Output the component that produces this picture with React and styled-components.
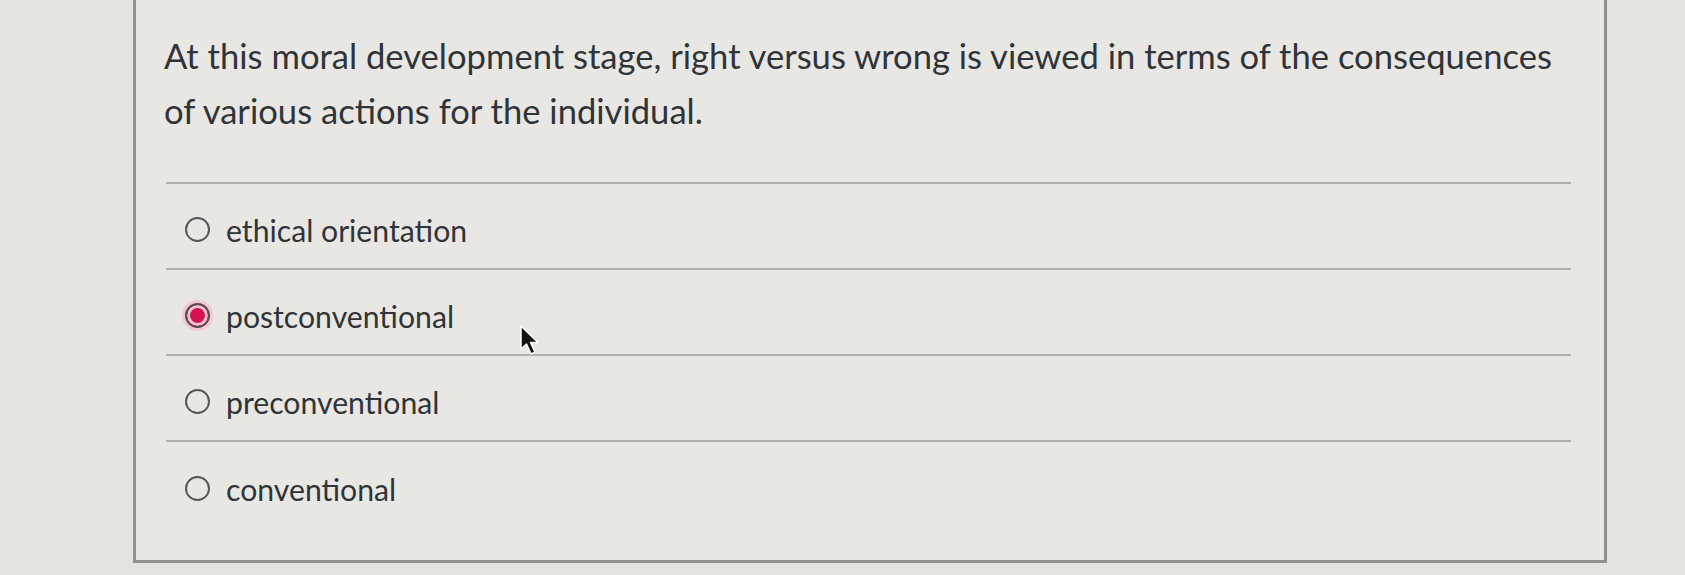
import styled, { createGlobalStyle } from 'styled-components';

const GlobalStyle = createGlobalStyle`
	html, body {
		margin: 0;
		padding: 0;
		background: #e3e3e0;
	}

	body {
		font-family: Lato, "Open Sans", sans-serif;
		color: #303438;
	}
`;

const options = [
	{ id: 'ethical', label: 'ethical orientation' },
	{ id: 'post', label: 'postconventional', selected: true },
	{ id: 'pre', label: 'preconventional' },
	{ id: 'conv', label: 'conventional' },
];

const Page = styled.div`
	position: relative;
	width: 1685px;
	height: 575px;
	overflow: hidden;
	padding-left: 133px;
	box-sizing: border-box;
`;

const Card = styled.div`
	width: 1474px;
	height: 563px;
	box-sizing: border-box;
	background: #e8e7e3;
	border: 3px solid #8f8f8c;
	border-top: none;
	padding: 28px 33px 0 28px;
`;

const Question = styled.p`
	margin: 0 0 44px 0;
	font-size: 34.6px;
	line-height: 55px;
`;

const List = styled.div`
	display: flex;
	flex-direction: column;
	margin-left: 2px;
	border-top: 2px solid #aeaeab;
`;

const Row = styled.label`
	display: flex;
	align-items: center;
	gap: 16px;
	height: 86px;
	padding-left: 19px;
	padding-top: 7px;
	box-sizing: border-box;
	border-bottom: ${({ $last }) => ($last ? 'none' : '2px solid #aeaeab')};
	font-size: 30.2px;
	cursor: default;
`;

const Radio = styled.span`
	flex: none;
	width: 25px;
	height: 25px;
	box-sizing: border-box;
	border-radius: 50%;
	border: 2px solid ${({ $checked }) => ($checked ? '#5a4a50' : '#555758')};
	background: ${({ $checked }) => ($checked ? '#d3124f' : 'transparent')};
	box-shadow: ${({ $checked }) =>
		$checked ? 'inset 0 0 0 3px #f4c3d1, 0 0 0 3px #f1c9d4' : 'none'};
`;

const Cursor = styled.svg`
	position: absolute;
	left: 519px;
	top: 325px;
	width: 22px;
	height: 32px;
`;

export default function App() {
	return (
		<Page>
			<GlobalStyle />
			<Card>
				<Question>
					At this moral development stage, right versus wrong is viewed in terms of the consequences
					of various actions for the individual.
				</Question>
				<List>
					{options.map((o, i) => (
						<Row key={o.id} $last={i === options.length - 1}>
							<Radio $checked={o.selected} />
							<span>{o.label}</span>
						</Row>
					))}
				</List>
			</Card>
			<Cursor viewBox="0 0 22 32">
				<path
					d="M2 1 L2 24 L7.5 19 L12 29 L16 27.2 L11.5 17.5 L19 17.5 Z"
					fill="#111"
					stroke="#fff"
					strokeWidth="1.5"
					strokeLinejoin="round"
				/>
			</Cursor>
		</Page>
	);
}
